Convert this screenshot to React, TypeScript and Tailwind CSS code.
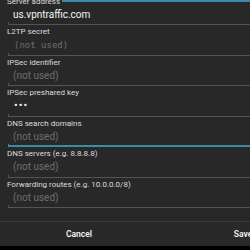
import React from "react";

type Field = {
  label: string;
  value?: string;
  hint?: string;
  mono?: boolean;
  password?: boolean;
  focused?: boolean;
};

const fields: Field[] = [
  { label: "Server address", value: "us.vpntraffic.com" },
  { label: "L2TP secret", hint: "(not used)", mono: true },
  { label: "IPSec identifier", hint: "(not used)" },
  { label: "IPSec preshared key", value: "•••", password: true },
  { label: "DNS search domains", hint: "(not used)", focused: true },
  { label: "DNS servers (e.g. 8.8.8.8)", hint: "(not used)" },
  { label: "Forwarding routes (e.g. 10.0.0.0/8)", hint: "(not used)" },
];

function FieldRow({ f }: { f: Field }) {
  return (
    <div className="h-[30.5px] flex flex-col">
      <div className="h-[13px] pl-[7px] text-[8px] leading-[13px] text-[#dcdcdc]">{f.label}</div>
      <div className="flex-1 flex flex-col">
        <div
          className={
            "h-[14px] leading-[14px] pl-[13px] " +
            (f.mono
              ? "font-['DejaVu_Sans_Mono',monospace] text-[9px] text-[#6e6e6e] pl-[14px]"
              : f.password
              ? "text-[11px] tracking-[1px] text-[#f2f2f2] pl-[14px]"
              : f.value
              ? "text-[10px] text-[#f4f4f4]"
              : "text-[10px] text-[#6e6e6e]")
          }
        >
          {f.value ?? f.hint}
        </div>
        <div className="flex-1" />
        {f.focused ? (
          <div className="ml-[8px] h-[3px] border-l border-b-2 border-[#3b8ba7]" />
        ) : (
          <div className="ml-[8px] h-[3px] border-l border-b border-[#545454]" />
        )}
      </div>
    </div>
  );
}

export default function App() {
  return (
    <div className="w-[250px] h-[250px] overflow-hidden bg-[#282828] flex flex-col font-['Roboto',sans-serif]">
      <div className="relative h-[221px] overflow-hidden">
        <div className="mt-[-5.5px]">
          {fields.map((f) => (
            <FieldRow key={f.label} f={f} />
          ))}
        </div>
        <div className="absolute top-0 left-[62px] right-0 h-[2px] bg-[#3a8ca6]" />
      </div>
      <div className="h-[25px] flex border-t border-[#3a3a3a] bg-[#292929]">
        <div className="w-[162px] shrink-0 flex items-center justify-center pr-[4px] text-[8.5px] font-semibold text-[#f0f0f0]">
          Cancel
        </div>
        <div className="w-px bg-[#3a3a3a] my-0" />
        <div className="w-[162px] shrink-0 flex items-center justify-center text-[8.5px] font-semibold text-[#f0f0f0]">
          Save
        </div>
      </div>
      <div className="flex-1 bg-black" />
    </div>
  );
}
